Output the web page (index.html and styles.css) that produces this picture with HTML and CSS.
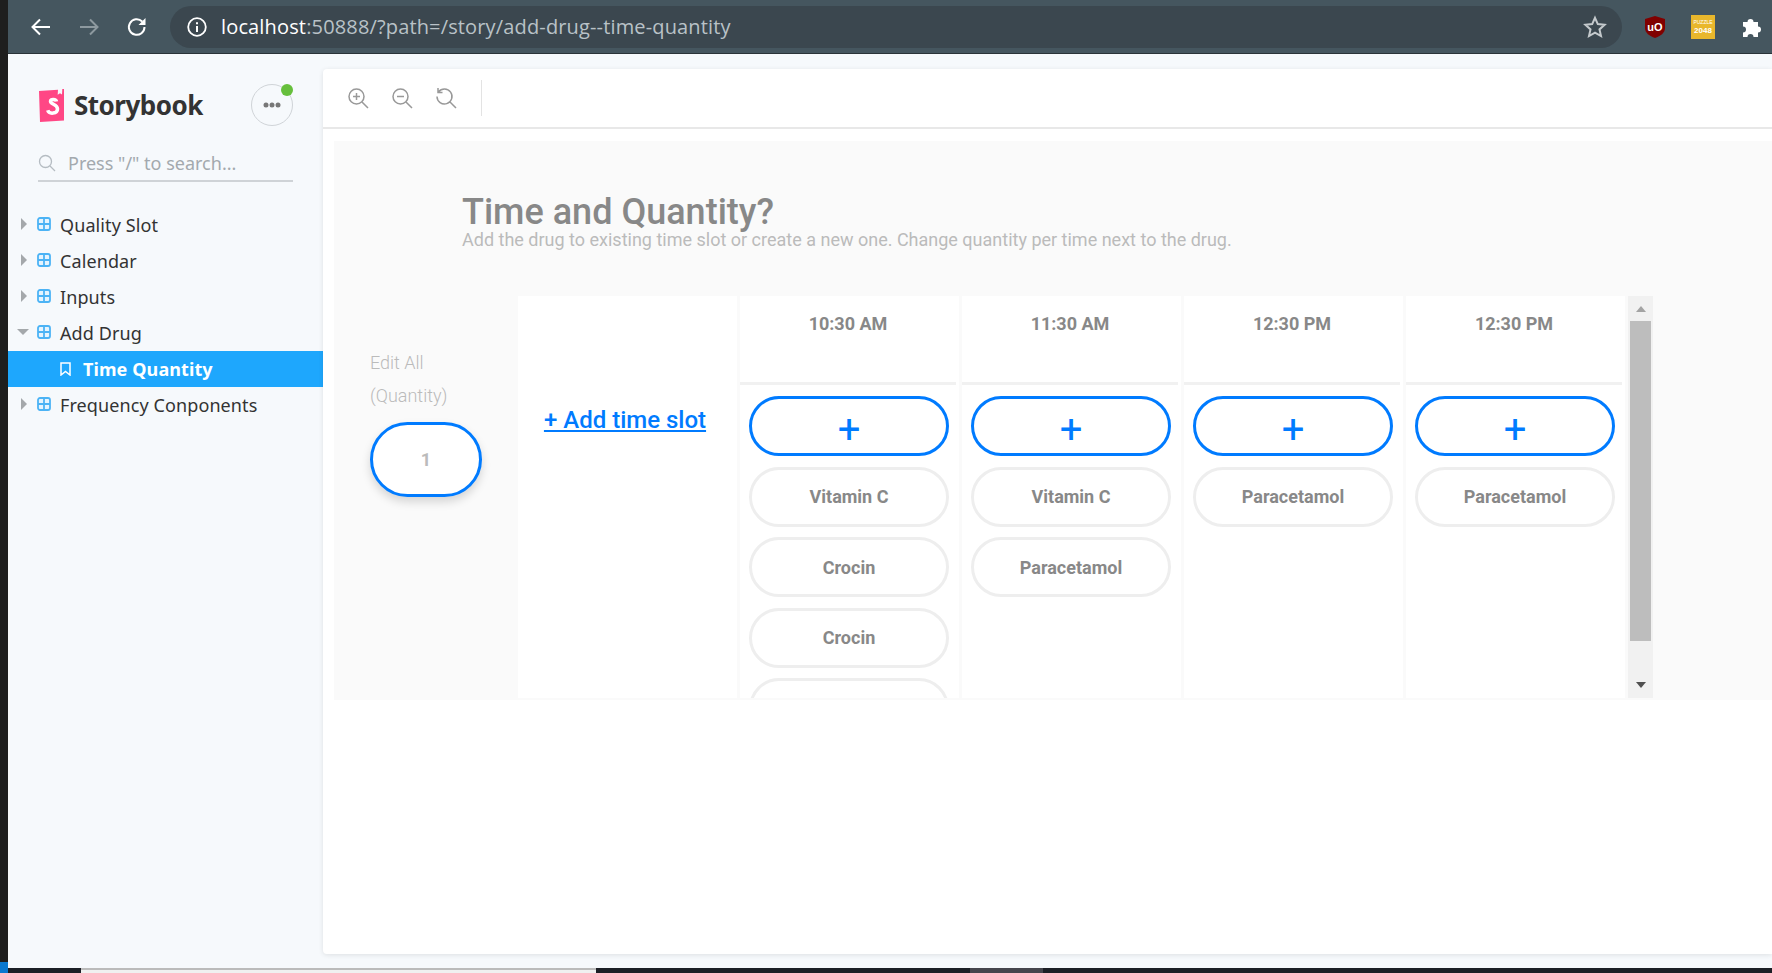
FILE: index.html
```html
<!DOCTYPE html>
<html lang="en">
<head>
    <meta charset="utf-8">
    <title>Storybook</title>
    <link rel="stylesheet" href="styles.css">
</head>
<body>
    <div class="window">
        <header class="browser">
            <svg class="nav" width="24" height="24" viewBox="0 0 24 24"><path d="M21 12H4M11 4.500 3.500 12l7.500 7.500" fill="none" stroke="#fff" stroke-width="2"/></svg>
            <svg class="nav" width="24" height="24" viewBox="0 0 24 24"><path d="M3 12h17M13 4.500l7.500 7.500-7.500 7.500" fill="none" stroke="#8d999f" stroke-width="2"/></svg>
            <svg class="nav" width="24" height="24" viewBox="0 0 24 24"><path d="M19.500 12a7.800 7.800 0 1 1-2.300-5.500" fill="none" stroke="#fff" stroke-width="2"/><path d="M20.500 3v7h-7z" fill="#fff"/></svg>
            <div class="omnibox">
                <svg width="22" height="22" viewBox="0 0 22 22"><circle cx="11" cy="11" r="8.800" fill="none" stroke="#fff" stroke-width="1.800"/><path d="M10 10h2v6h-2zM10 6.200h2v2h-2z" fill="#fff"/></svg>
                <div class="url"><span class="host">localhost</span>:50888/?path=/story/add-drug--time-quantity</div>
                <svg width="24" height="24" viewBox="0 0 24 24"><path d="m12 2.800 2.800 6.300 6.800.7-5.100 4.600 1.500 6.700-6-3.500-6 3.500 1.500-6.700-5.100-4.600 6.800-.7z" fill="none" stroke="#c4c9cc" stroke-width="2"/></svg>
            </div>
            <div class="extensions">
                <svg width="20" height="22" viewBox="0 0 20 22"><path d="M10 0 20 3v9c0 5-4.500 8-10 10C4.500 20 0 17 0 12V3z" fill="#800000"/><text x="10" y="14.500" class="ublock">uO</text></svg>
                <div class="puzzle"><span class="puzzle-top">PUZZLE</span><span>2048</span></div>
                <svg width="22" height="22" viewBox="0 0 22 22"><path d="M2 6h4.500a3 3 0 1 1 6 0H17v4.500a3 3 0 1 1 0 6V21h-4.500a3 3 0 0 0-6 0H2v-4.500a3 3 0 1 0 0-6z" fill="#fff"/></svg>
            </div>
        </header>

        <div class="app">
            <nav class="sidebar">
                <div class="brand">
                    <svg width="27" height="33" viewBox="0 0 27 33"><path d="M1 2 20 .8l-.3 5 2.300-1.600 2 1.400.3-5.700L26 0v31.500L2 33z" fill="#ff4785"/><path d="M18.500 12.500c-.5-2.500-6-3-6-.3 0 3.300 7 2.800 7 7.800 0 5-8.500 5.500-9.800 1.300" fill="none" stroke="#fff" stroke-width="3.500"/></svg>
                    <span class="brand-name">Storybook</span>
                    <button class="menu-btn">
                        <svg width="18" height="6" viewBox="0 0 18 6"><circle cx="3" cy="3" r="2.500"/><circle cx="9" cy="3" r="2.500"/><circle cx="15" cy="3" r="2.500"/></svg>
                        <i class="status"></i>
                    </button>
                </div>
                <div class="search">
                    <svg width="18" height="18" viewBox="0 0 18 18"><circle cx="7.500" cy="7.500" r="6" fill="none" stroke="#b5bcc2" stroke-width="1.300"/><path d="m12 12 5 5" stroke="#b5bcc2" stroke-width="1.300"/></svg>
                    <span>Press "/" to search...</span>
                </div>
                <ul class="tree">
                    <li class="tree-row"><i class="arrow"></i><svg class="grid-icon" viewBox="0 0 14 14"><rect x="1" y="1" width="12" height="12" rx="2"/><path d="M7 1v12M1 7h12"/></svg>Quality Slot</li>
                    <li class="tree-row"><i class="arrow"></i><svg class="grid-icon" viewBox="0 0 14 14"><rect x="1" y="1" width="12" height="12" rx="2"/><path d="M7 1v12M1 7h12"/></svg>Calendar</li>
                    <li class="tree-row"><i class="arrow"></i><svg class="grid-icon" viewBox="0 0 14 14"><rect x="1" y="1" width="12" height="12" rx="2"/><path d="M7 1v12M1 7h12"/></svg>Inputs</li>
                    <li class="tree-row"><i class="arrow open"></i><svg class="grid-icon" viewBox="0 0 14 14"><rect x="1" y="1" width="12" height="12" rx="2"/><path d="M7 1v12M1 7h12"/></svg>Add Drug</li>
                    <li class="tree-row selected"><svg class="mark" width="11" height="14" viewBox="0 0 11 14"><path d="M1 1h9v12L5.500 9.500 1 13z" fill="none" stroke="#fff" stroke-width="1.500"/></svg>Time Quantity</li>
                    <li class="tree-row"><i class="arrow"></i><svg class="grid-icon" viewBox="0 0 14 14"><rect x="1" y="1" width="12" height="12" rx="2"/><path d="M7 1v12M1 7h12"/></svg>Frequency Conponents</li>
                </ul>
            </nav>

            <main class="preview">
                <div class="toolbar">
                    <svg class="tool" width="22" height="22" viewBox="0 0 22 22"><circle cx="9.500" cy="9.500" r="7.500"/><path d="m15 15 6 6M9.500 6v7M6 9.500h7"/></svg>
                    <svg class="tool" width="22" height="22" viewBox="0 0 22 22"><circle cx="9.500" cy="9.500" r="7.500"/><path d="m15 15 6 6M6 9.500h7"/></svg>
                    <svg class="tool" width="22" height="22" viewBox="0 0 22 22"><path d="M3.500 5A7.500 7.500 0 1 1 2 9.500M3 1v4.500h4.500M15 15l6 6"/></svg>
                    <i class="tool-sep"></i>
                </div>
                <div class="canvas">
                    <h1 class="title">Time and Quantity?</h1>
                    <p class="subtitle">Add the drug to existing time slot or create a new one. Change quantity per time next to the drug.</p>
                    <div class="board">
                        <div class="edit-all">
                            <div class="edit-label">Edit All</div>
                            <div class="edit-label">(Quantity)</div>
                            <div class="qty">1</div>
                        </div>
                        <div class="table">
                            <div class="add-slot"><a href="#">+ Add time slot</a></div>
                            <section class="slot">
                                <div class="slot-head">10:30 AM</div>
                                <div class="slot-body">
                                    <div class="pill add">+</div>
                                    <div class="pill">Vitamin C</div>
                                    <div class="pill">Crocin</div>
                                    <div class="pill">Crocin</div>
                                    <div class="pill"></div>
                                </div>
                            </section>
                            <section class="slot">
                                <div class="slot-head">11:30 AM</div>
                                <div class="slot-body">
                                    <div class="pill add">+</div>
                                    <div class="pill">Vitamin C</div>
                                    <div class="pill">Paracetamol</div>
                                </div>
                            </section>
                            <section class="slot">
                                <div class="slot-head">12:30 PM</div>
                                <div class="slot-body">
                                    <div class="pill add">+</div>
                                    <div class="pill">Paracetamol</div>
                                </div>
                            </section>
                            <section class="slot">
                                <div class="slot-head">12:30 PM</div>
                                <div class="slot-body">
                                    <div class="pill add">+</div>
                                    <div class="pill">Paracetamol</div>
                                </div>
                            </section>
                        </div>
                        <div class="scrollbar">
                            <i class="sb-up"></i>
                            <i class="sb-thumb"></i>
                            <i class="sb-down"></i>
                        </div>
                    </div>
                </div>
            </main>
        </div>
    </div>
    <div class="taskbar">
        <i class="task-active"></i>
        <i class="task-tab"></i>
        <i class="task-btn"></i>
    </div>
</body>
</html>
```

FILE: styles.css
```css
* {
    box-sizing: border-box;
}
html, body {
    height: 100%;
}
body {
    margin: 0;
    display: flex;
    flex-direction: column;
    overflow: hidden;
    background: #1e1e1e;
    font-family: "Noto Sans", sans-serif;
}

.window {
    height: 968px;
    margin-left: 8px;
    display: flex;
    flex-direction: column;
    overflow: hidden;
}

/* browser chrome */
.browser {
    flex: none;
    height: 54px;
    display: flex;
    align-items: center;
    background: #45565f;
    border-bottom: 1px solid #2a3338;
    padding-left: 21px;
}
.nav {
    flex: none;
    margin-right: 24px;
}
.nav:nth-child(3) {
    margin-right: 21px;
}
.omnibox {
    flex: none;
    width: 1452px;
    height: 42px;
    display: flex;
    align-items: center;
    gap: 13px;
    padding: 0 15px 0 16px;
    border-radius: 21px;
    background: #3b474f;
}
.url {
    flex: 1;
    color: #b9c2c7;
    font-family: "Open Sans", sans-serif;
    font-size: 20px;
    letter-spacing: 0.15px;
}
.host {
    color: #fff;
}
.extensions {
    flex: none;
    display: flex;
    align-items: center;
    gap: 26px;
    margin-left: 23px;
}
.ublock {
    fill: #fff;
    font: bold 11px "Liberation Sans", sans-serif;
    text-anchor: middle;
}
.puzzle {
    width: 24px;
    height: 24px;
    display: flex;
    flex-direction: column;
    align-items: center;
    justify-content: center;
    background: #e9b72c;
    color: #fff;
    font: bold 8px/9px "Liberation Sans", sans-serif;
}
.puzzle-top {
    font-size: 5px;
    line-height: 7px;
    font-weight: normal;
}

/* storybook shell */
.app {
    flex: 1;
    display: flex;
    min-height: 0;
    background: #f6f9fc;
}
.sidebar {
    flex: none;
    width: 315px;
    padding-top: 28px;
}
.brand {
    display: flex;
    align-items: center;
    height: 46px;
    padding-left: 30px;
}
.brand-name {
    margin-left: 9px;
    color: #333;
    font-size: 26px;
    font-weight: 700;
    letter-spacing: -0.5px;
}
.menu-btn {
    position: relative;
    width: 42px;
    height: 42px;
    margin-left: 48px;
    padding: 0;
    display: flex;
    align-items: center;
    justify-content: center;
    border: 1.500px solid #d0d4d8;
    border-radius: 50%;
    background: none;
    fill: #777;
}
.status {
    position: absolute;
    top: -1.500px;
    right: -1.500px;
    width: 12px;
    height: 12px;
    border-radius: 50%;
    background: #66bf3c;
}
.search {
    display: flex;
    align-items: center;
    gap: 12px;
    height: 36px;
    margin: 18px 30px 0;
    width: 255px;
    border-bottom: 2px solid #cfd3d7;
    color: #a3a9ae;
    font-size: 18px;
}
.tree {
    list-style: none;
    margin: 25px 0 0;
    padding: 0;
}
.tree-row {
    display: flex;
    align-items: center;
    height: 36px;
    padding-left: 11px;
    color: #333;
    font-size: 18px;
    letter-spacing: 0.1px;
}
.arrow {
    width: 0;
    height: 0;
    margin: -2px 6px 0 2px;
    border-style: solid;
    border-width: 6px 0 6px 6px;
    border-color: transparent transparent transparent #a4a8ab;
}
.arrow.open {
    margin: -2px 4px 0 -2px;
    border-width: 6px 6px 0 6px;
    border-color: #a4a8ab transparent transparent;
}
.grid-icon {
    width: 14px;
    height: 14px;
    margin: -2px 9.500px 0 3.500px;
    fill: #e6f4fe;
    stroke: #4cb3f5;
    stroke-width: 1.800;
}
.selected {
    background: #1ea7fd;
    color: #fff;
    font-weight: 700;
}
.mark {
    margin: 0 12px 0 41px;
}

.preview {
    flex: 1;
    align-self: flex-start;
    height: 885px;
    margin-top: 15px;
    border-radius: 4px 0 0 4px;
    background: #fff;
    box-shadow: 0 1px 5px rgba(0, 0, 0, 0.1);
    overflow: hidden;
}
.toolbar {
    height: 60px;
    display: flex;
    align-items: center;
    gap: 22px;
    padding: 0 0 0 24px;
    border-bottom: 2px solid #e8e8e8;
}
.tool {
    fill: none;
    stroke: #999;
    stroke-width: 1.500;
}
.tool-sep {
    width: 1px;
    height: 36px;
    margin-left: 2px;
    background: #e3e3e3;
}

/* story */
.canvas {
    height: 559px;
    margin: 12px 0 0 11px;
    padding: 53px 0 0 0;
    background: #fafafa;
    font-family: Roboto, sans-serif;
}
.title {
    margin: 0 0 0 128px;
    color: #888;
    font-size: 36px;
    line-height: 36px;
    font-weight: 500;
}
.subtitle {
    margin: 0 0 0 128px;
    color: #bbb;
    font-size: 18px;
    line-height: 20px;
}
.board {
    display: flex;
    margin-top: 46px;
    height: 402px;
}
.edit-all {
    width: 184px;
    padding: 50px 0 0 36px;
}
.edit-label {
    color: #bbb;
    font-size: 18px;
    font-weight: 300;
    line-height: 33px;
}
.qty {
    width: 112px;
    height: 75px;
    margin-top: 10px;
    display: flex;
    align-items: center;
    justify-content: center;
    border: 3px solid #007bff;
    border-radius: 38px;
    background: #fff;
    box-shadow: 0 5px 10px rgba(0, 0, 0, 0.15);
    color: #bbb;
    font-size: 18px;
    font-weight: 700;
}
.table {
    display: flex;
    gap: 3px;
    width: 1107px;
    height: 402px;
    overflow: hidden;
}
.add-slot {
    width: 219px;
    display: flex;
    justify-content: center;
    padding: 106px 5px 0 0;
    background: #fff;
}
.add-slot a {
    color: #007bff;
    font-size: 24px;
    font-weight: 500;
    line-height: 36px;
    height: 36px;
}
.slot {
    width: 219px;
    background: #fff;
    flex: none;
}
.slot-head {
    height: 89px;
    width: 216px;
    padding-top: 17px;
    border-bottom: 3px solid #f1f1f1;
    color: #888;
    font-size: 18px;
    font-weight: 700;
    line-height: 21px;
    text-align: center;
}
.slot-body {
    display: flex;
    flex-direction: column;
    gap: 10.500px;
    padding: 11px 0 0 9px;
}
.pill {
    flex: none;
    width: 200px;
    height: 60px;
    display: flex;
    align-items: center;
    justify-content: center;
    border: 3px solid #eee;
    border-radius: 30px;
    color: #888;
    font-size: 18px;
    font-weight: 700;
}
.pill.add {
    padding-top: 6px;
    border-color: #007bff;
    color: #007bff;
    font-size: 40px;
    font-weight: 400;
}
.scrollbar {
    width: 25px;
    margin-left: 3px;
    padding: 0 2px;
    display: flex;
    flex-direction: column;
    align-items: center;
    background: #f1f1f1;
}
.sb-up, .sb-down {
    width: 0;
    height: 0;
    border-style: solid;
}
.sb-up {
    margin-top: 10px;
    margin-bottom: 9px;
    border-width: 0 5.500px 6px;
    border-color: transparent transparent #a3a3a3;
}
.sb-thumb {
    width: 21px;
    height: 320px;
    background: #bdbdbd;
}
.sb-down {
    margin-top: 41px;
    border-width: 6px 5.500px 0;
    border-color: #505050 transparent transparent;
}

.taskbar {
    flex: 1;
    position: relative;
    background: #1c1f26;
}
.task-tab {
    position: absolute;
    left: 81px;
    top: 0;
    width: 515px;
    height: 5px;
    background: #f0f0f0;
    border-top: 2px solid #bbb;
}
.task-btn {
    position: absolute;
    left: 970px;
    top: 0;
    width: 73px;
    height: 5px;
    background: #45454d;
}
.task-active {
    position: absolute;
    left: 0;
    top: -6px;
    width: 8px;
    height: 11px;
    background: #0a78d0;
}
```
